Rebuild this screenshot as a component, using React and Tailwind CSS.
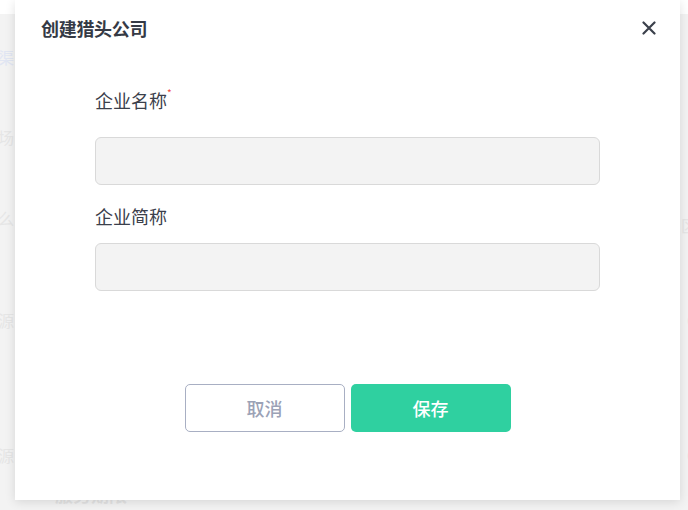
const fields = [
  { label: "企业名称", required: true, labelClass: "mt-[31px]", inputClass: "mt-[24px]" },
  { label: "企业简称", required: false, labelClass: "mt-[18px]", inputClass: "mt-[14px]" },
];

// faint rows of the page behind the dialog
const ghostRows = [
  { left: "卖渠", right: "", h: "h-[80px]", leftColor: "text-[#e1e6f3]" },
  { left: "女场", right: "", h: "h-[81px]", leftColor: "text-[#e6e6e6]" },
  { left: "怎么", right: "区", h: "h-[102px]", leftColor: "text-[#e6e6e6]" },
  { left: "来源", right: "C", h: "h-[135px]", leftColor: "text-[#e6e6e6]" },
  { left: "来源", right: "C", h: "h-[38px]", leftColor: "text-[#e6e6e6]" },
];

function Backdrop() {
  return (
    <div className="absolute inset-x-0 top-[14px] bottom-0 bg-[#f3f3f3] pt-[31px] flex flex-col">
      {ghostRows.map((r, i) => (
        <div key={i} className={`${r.h} shrink-0 flex justify-between items-start`}>
          <span className={`-ml-[18px] text-[16px] leading-[24px] ${r.leftColor}`}>{r.left}</span>
          <span className={`mr-[-9px] text-[16px] leading-[24px] text-[#e6e6e6] ${r.right === "区" ? "mt-[7px]" : ""}`}>
            {r.right}
          </span>
        </div>
      ))}
      <span className="ml-[55px] text-[18px] leading-[26px] font-semibold text-[#e3e3e3]">服务期限</span>
    </div>
  );
}

function CloseIcon() {
  return (
    <svg width="14" height="14" viewBox="0 0 14 14" fill="none" stroke="currentColor" strokeWidth="2.2" strokeLinecap="round">
      <path d="M1.5 1.5 12.5 12.5M12.5 1.5 1.5 12.5" />
    </svg>
  );
}

export default function App() {
  return (
    <div
      className="relative w-[688px] h-[510px] overflow-hidden bg-white"
      style={{ fontFamily: '"Noto Sans CJK SC", "Noto Sans", sans-serif' }}
    >
      <Backdrop />

      <div className="absolute left-[15px] top-0 w-[665px] h-[500px] bg-white shadow-[0_2px_10px_rgba(0,0,0,0.12)]">
        <div className="h-[56px] flex items-center justify-between pl-[26px] pr-[24px]">
          <h2 className="text-[18px] font-bold text-[#353a45] tracking-[-0.3px]">创建猎头公司</h2>
          <button className="text-[#3b404b]">
            <CloseIcon />
          </button>
        </div>

        <div className="px-[80px]">
          {fields.map((f) => (
            <div key={f.label}>
              <div className={`${f.labelClass} h-[26px] flex items-start text-[18px] leading-[26px] text-[#3b404b]`}>
                <span>{f.label}</span>
                {f.required && (
                  <span className="text-[10px] leading-[10px] mt-[1px] text-[#f04a3e]">*</span>
                )}
              </div>
              <input
                className={`${f.inputClass} block w-full h-[48px] rounded-[6px] border border-[#d9d9d9] bg-[#f3f3f3] outline-none px-3`}
              />
            </div>
          ))}
        </div>

        <div className="mt-[93px] flex justify-center gap-[6px]">
          <button className="w-[160px] h-[48px] rounded-[5px] border border-[#a8afc3] bg-white text-[18px] text-[#9ba2b6] font-medium">
            取消
          </button>
          <button className="w-[160px] h-[48px] rounded-[5px] bg-[#2fd0a0] text-[18px] text-white font-medium">
            保存
          </button>
        </div>
      </div>
    </div>
  );
}
